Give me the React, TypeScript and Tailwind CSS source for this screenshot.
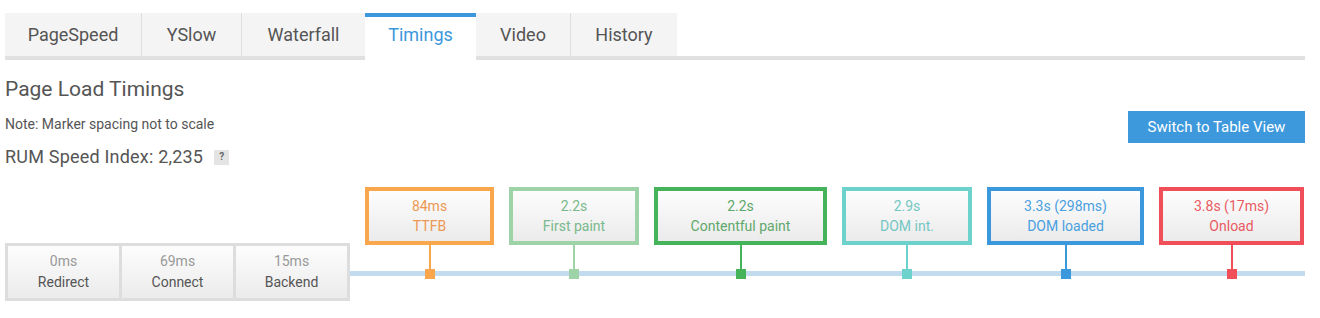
import React from "react";

const tabs = [
  { label: "PageSpeed", w: "w-[137px]", sep: true },
  { label: "YSlow", w: "w-[100px]", sep: true },
  { label: "Waterfall", w: "w-[123px]", sep: false },
  { label: "Timings", w: "w-[111px]", sep: false, active: true },
  { label: "Video", w: "w-[95px]", sep: true },
  { label: "History", w: "w-[106px]", sep: false },
];

const phases = [
  { value: "0ms", label: "Redirect" },
  { value: "69ms", label: "Connect" },
  { value: "15ms", label: "Backend" },
];

const markers = [
  { value: "84ms", label: "TTFB", w: "w-[129px]", border: "border-[#f9a64c]", fill: "bg-[#f9a64c]", text: "text-[#ec9852]" },
  { value: "2.2s", label: "First paint", w: "w-[130px]", border: "border-[#9dd3a6]", fill: "bg-[#9dd3a6]", text: "text-[#79b98b]" },
  { value: "2.2s", label: "Contentful paint", w: "w-[173px]", border: "border-[#44b35a]", fill: "bg-[#44b35a]", text: "text-[#5fa86c]" },
  { value: "2.9s", label: "DOM int.", w: "w-[130px]", border: "border-[#6dd2cc]", fill: "bg-[#6dd2cc]", text: "text-[#74c7c3]" },
  { value: "3.3s (298ms)", label: "DOM loaded", w: "w-[157px]", border: "border-[#3c98dc]", fill: "bg-[#3c98dc]", text: "text-[#4a9fe0]" },
  { value: "3.8s (17ms)", label: "Onload", w: "w-[145px]", border: "border-[#f04f59]", fill: "bg-[#f04f59]", text: "text-[#ea5a62]" },
];

export default function App() {
  return (
    <div className="h-[318px] w-[1320px] bg-white pt-[13px] pl-[5px] font-['Roboto',sans-serif] text-[#555]">
      <div className="w-[1300px]">
        {/* tabs */}
        <div className="flex items-start border-b-4 border-[#e0e0e0]">
          {tabs.map((t) =>
            t.active ? (
              <div
                key={t.label}
                className={`${t.w} relative -mb-[4px] flex h-[47px] items-start justify-center border-t-4 border-[#3b98dc] bg-white pt-[4px] text-[18px] text-[#3b98dc]`}
              >
                {t.label}
              </div>
            ) : (
              <div
                key={t.label}
                className={`${t.w} flex h-[43px] items-center justify-center bg-[#f4f4f4] text-[18px] ${
                  t.sep ? "border-r border-[#dedede]" : ""
                }`}
              >
                {t.label}
              </div>
            )
          )}
        </div>

        {/* header */}
        <div className="flex items-start justify-between">
          <div>
            <h2 className="mt-[15px] text-[21px] leading-[28px]">Page Load Timings</h2>
            <p className="mt-[11px] text-[14px] leading-[20px]">Note: Marker spacing not to scale</p>
            <div className="mt-[11px] flex items-center text-[18px] leading-[24px] tracking-[0.2px]">
              RUM Speed Index: 2,235
              <span className="ml-[11px] flex h-[15px] w-[15px] items-center justify-center bg-[#e4e4e4] text-[10px] font-bold tracking-normal text-[#666]">
                ?
              </span>
            </div>
          </div>
          <button className="mt-[51px] h-[32px] w-[177px] bg-[#3d99dc] text-[15px] text-white">
            Switch to Table View
          </button>
        </div>

        {/* timeline */}
        <div className="mt-[18px] flex items-start">
          <div className="mt-[56px] flex w-[345px] gap-[3px] bg-[#dddddd] p-[3px]">
            {phases.map((p) => (
              <div
                key={p.label}
                className="flex h-[52px] flex-1 flex-col items-center justify-center bg-gradient-to-b from-[#fdfdfd] to-[#ebebeb] text-[14px] leading-[21px]"
              >
                <span className="text-[#999]">{p.value}</span>
                <span>{p.label}</span>
              </div>
            ))}
          </div>

          <div className="relative flex flex-1 gap-[15px] pl-[15px]">
            <div className="absolute left-0 right-0 top-[84px] h-[5px] bg-[#c2dbee]" />
            {markers.map((m) => (
              <div key={m.label} className={`${m.w} relative flex flex-col items-center`}>
                <div
                  className={`flex h-[58px] w-full flex-col items-center justify-center border-4 ${m.border} bg-gradient-to-b from-[#fdfdfd] to-[#ebebeb] text-[14px] leading-[20px] ${m.text}`}
                >
                  <span>{m.value}</span>
                  <span>{m.label}</span>
                </div>
                <div className={`h-[24px] w-[2px] ${m.fill}`} />
                <div className={`h-[10px] w-[10px] ${m.fill}`} />
              </div>
            ))}
          </div>
        </div>
      </div>
    </div>
  );
}
